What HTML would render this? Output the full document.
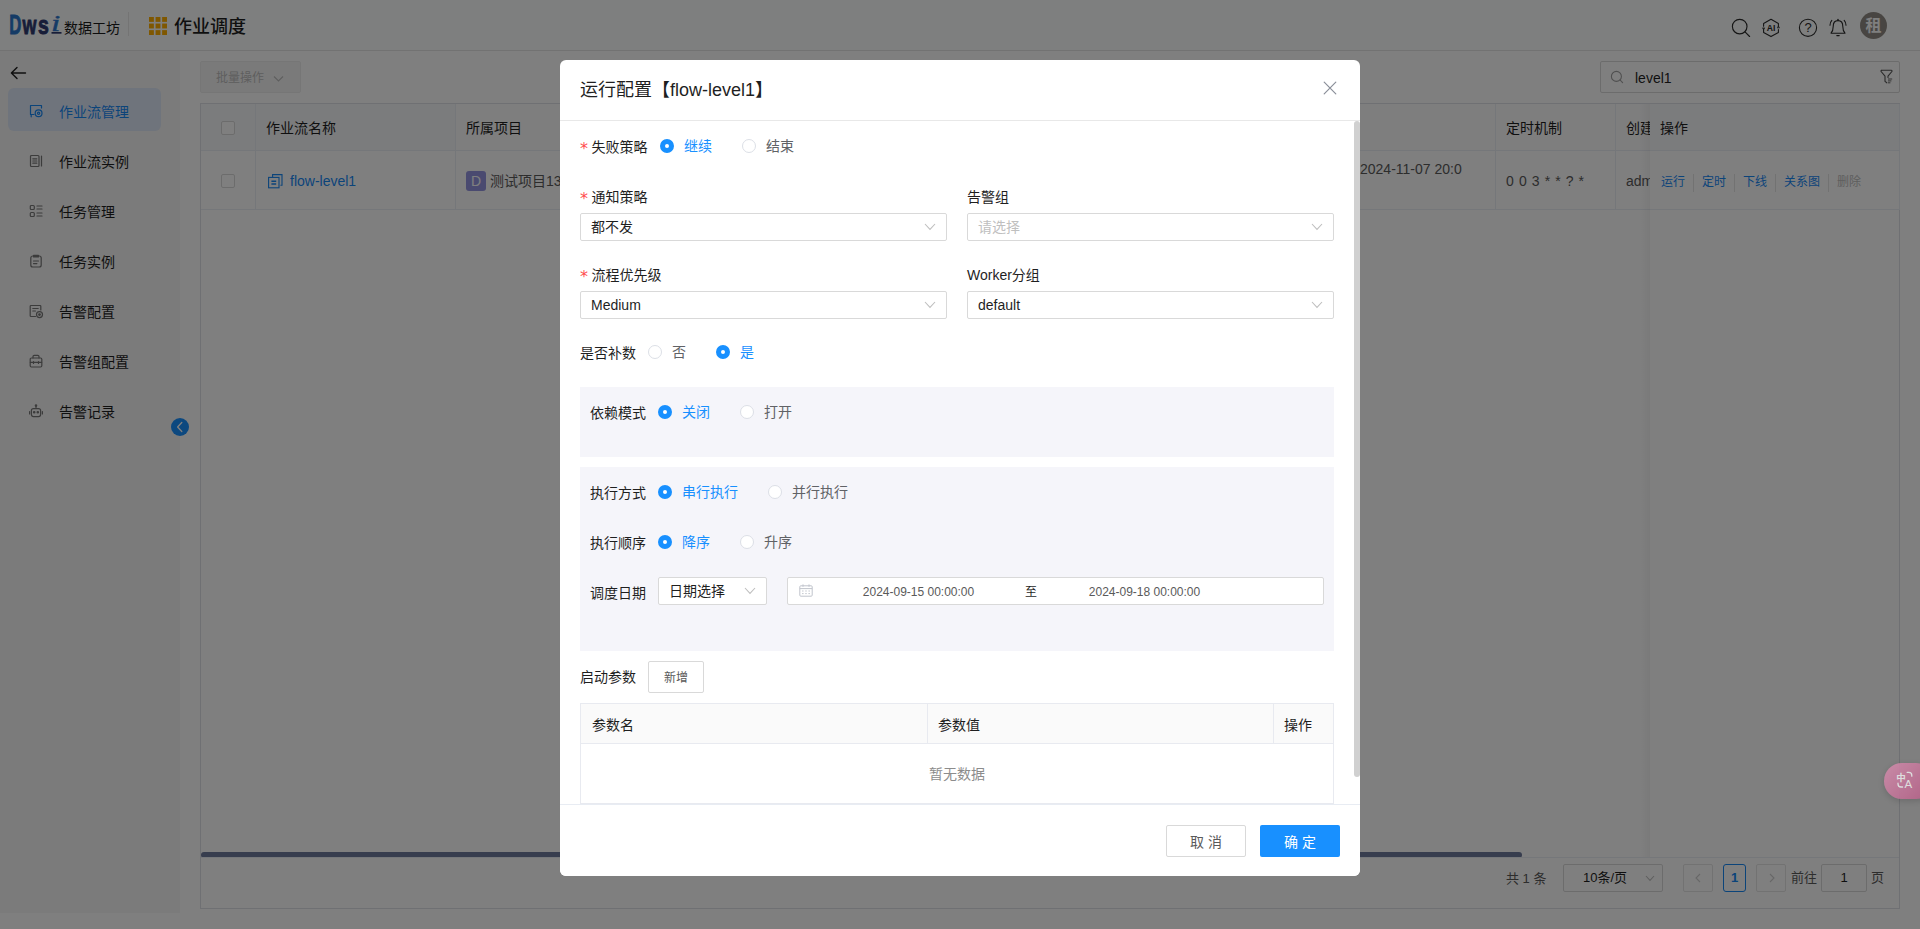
<!DOCTYPE html>
<html lang="zh-CN">
<head>
<meta charset="utf-8">
<title>作业调度</title>
<style>
*{box-sizing:border-box;margin:0;padding:0}
html,body{width:1920px;height:929px;overflow:hidden;background:#fff}
body{font-family:"Liberation Sans","Noto Sans CJK SC",sans-serif;font-size:14px;color:#1f1f1f;position:relative}
.abs{position:absolute}
/* ---------- header ---------- */
#hdr{position:absolute;left:0;top:0;width:1920px;height:51px;background:#fdfffe;border-bottom:1px solid #e4e4e4}
#hdr .cn{position:absolute;left:64px;top:18.5px;font-size:14px;line-height:18px;color:#1a1a1a;white-space:nowrap}
#hdr .vdiv{position:absolute;left:128px;top:12px;width:1px;height:24px;background:#e8e8e8}
#hdr .title{position:absolute;left:174px;top:13.5px;font-size:18px;line-height:26px;font-weight:500;color:#1f1f1f;white-space:nowrap}
/* ---------- sidebar ---------- */
#side{position:absolute;left:0;top:51px;width:180px;height:862px;background:#f6f6f6}
#side .item{position:absolute;left:8px;width:153px;height:43px;border-radius:6px;font-size:14px;line-height:48px;color:#1f1f1f;padding-left:51px;white-space:nowrap}
#side .item.on{background:#dfe8f8;color:#1788f5}
#side .item svg{position:absolute;left:20px;top:15px}
#mainbg{position:absolute;left:180px;top:51px;width:1740px;height:862px;background:#fff}
#colbtn{position:absolute;left:171px;top:418px;width:18px;height:18px;border-radius:50%;background:#1890ff}
/* ---------- content ---------- */
.btn-batch{position:absolute;left:200px;top:61px;width:101px;height:32px;border-radius:2px;background:#f5f5f5;border:1px solid #ededed;color:#bdbdbd;font-size:12px;line-height:33px;padding-left:15px;white-space:nowrap}
.search{position:absolute;left:1600px;top:61px;width:300px;height:32px;border:1px solid #d9d9d9;border-radius:2px;background:#fff;font-size:14px;line-height:33px;padding-left:34px;color:#1f1f1f}
#tbl{position:absolute;left:200px;top:103px;width:1700px;height:806px;border:1px solid #dfe1e6;background:#fff}
#tbl .th{position:absolute;top:-1px;height:47px;background:#f7f8fa;border-bottom:1px solid #ebeef5;border-right:1px solid #ebeef5;font-size:14px;line-height:49px;padding-left:10px;color:#1f1f1f;white-space:nowrap;overflow:hidden}
#tbl .lnk{color:#1788f5 !important}
#tbl .td{position:absolute;top:46px;height:59px;border-bottom:1px solid #ebeef5;border-right:1px solid #ebeef5;font-size:14px;line-height:60px;padding-left:10px;color:#5a5a5a;white-space:nowrap;overflow:hidden}
.cb{position:absolute;width:14px;height:14px;border:1px solid #d9d9d9;border-radius:2px;background:#fff}
.lnk{color:#1788f5}
/* ---------- overlay + modal ---------- */
#mask{position:absolute;left:0;top:0;width:1920px;height:929px;background:rgba(0,0,0,.5)}
#modal{position:absolute;left:560px;top:60px;width:800px;height:816px;background:#fff;border-radius:6px;overflow:hidden}
#modal .mh{position:absolute;left:0;top:0;width:800px;height:61px;border-bottom:1px solid #e8e8e8}
#modal .mh .t{position:absolute;left:20px;top:16px;font-size:18px;line-height:28px;color:#1f1f1f;white-space:nowrap}
#modal .mf{position:absolute;left:0;top:744px;width:800px;height:72px;border-top:1px solid #e8ecf3;background:#fff}
.lab{position:absolute;font-size:14px;line-height:20px;color:#1f1f1f;white-space:nowrap}
.lab i{font-style:normal;color:#ff4d4f;font-family:"DejaVu Sans",sans-serif;font-size:16px;line-height:20px;display:inline-block;width:7.5px;margin-right:4px;vertical-align:-1.5px;font-weight:400}
.sel{position:absolute;height:28px;border:1px solid #d9d9d9;border-radius:2px;background:#fff;font-size:14px;line-height:26px;padding-left:10px;color:#1f1f1f;white-space:nowrap}
.sel.ph{color:#bfbfbf}
.sel svg{position:absolute;right:10.5px;top:9px}
.rd{position:absolute;width:14px;height:14px;border-radius:50%;border:1px solid #dcdfe6;background:#fff}
.rd.on{border:5px solid #1890ff}
.rt{position:absolute;font-size:14px;line-height:20px;color:#606266;white-space:nowrap}
.rt.on{color:#1890ff}
.panel{position:absolute;left:20px;width:754px;background:#f5f5fa}
.sp{display:inline-block;width:1px;height:18px;background:#e4e4e4;margin:0 8px;vertical-align:middle}
</style>
</head>
<body>
<!-- ================= HEADER ================= -->
<div id="hdr">
  <svg class="abs" style="left:8px;top:8px" width="60" height="32" viewBox="0 0 60 32" font-family="Liberation Sans, sans-serif" font-weight="700" font-size="28">
    <text transform="translate(1.2,26) scale(.6,1)" fill="#2b76cc" stroke="#2b76cc" stroke-width=".9">D</text>
    <text transform="translate(14.6,26) scale(.69,1)" font-size="26" fill="#2e3a70" stroke="#2e3a70" stroke-width=".9">w</text>
    <text transform="translate(30,26) scale(.75,1)" font-size="26" fill="#2e3a70" stroke="#2e3a70" stroke-width=".9">s</text>
    <text transform="translate(43,23) scale(1.4,1)" font-family="Liberation Serif, serif" font-style="italic" font-weight="400" font-size="24" fill="#2b76cc" stroke="#2b76cc" stroke-width=".4">i</text>
    <rect x="43.5" y="24" width="10" height="1.7" fill="#2e3a70"/>
  </svg>
  <div class="cn">数据工坊</div>
  <div class="vdiv"></div>
  <svg class="abs" style="left:149px;top:17px" width="18" height="18" viewBox="0 0 17 17"><g fill="#ffae00"><rect x="0" y="0" width="4.6" height="4.6"/><rect x="6.2" y="0" width="4.6" height="4.6"/><rect x="12.4" y="0" width="4.6" height="4.6"/><rect x="0" y="6.2" width="4.6" height="4.6"/><rect x="6.2" y="6.2" width="4.6" height="4.6"/><rect x="12.4" y="6.2" width="4.6" height="4.6"/><rect x="0" y="12.4" width="4.6" height="4.6"/><rect x="6.2" y="12.4" width="4.6" height="4.6"/><rect x="12.4" y="12.4" width="4.6" height="4.6"/></g></svg>
  <div class="title">作业调度</div>
  <!-- right icons -->
  <svg class="abs" style="left:1730px;top:17px" width="22" height="22" viewBox="0 0 22 22" fill="none" stroke="#2a2a2a" stroke-width="1.15"><circle cx="9.7" cy="9.6" r="7.3"/><path d="M15 14.9 L19.6 19.5" stroke-linecap="round"/></svg>
  <svg class="abs" style="left:1761px;top:18px" width="20" height="20" viewBox="0 0 20 20" fill="none" stroke="#2a2a2a" stroke-width="1.1" stroke-linejoin="round" stroke-linecap="round"><path d="M2.6 8.2 V5.4 L10 1.2 L17.4 5.4 V8.2"/><path d="M17.4 11.6 V14.4 L10 18.6 L2.6 14.4 V11.6"/><path d="M1.6 10.2 l1 1.6 l1 -1.6 z" fill="#2a2a2a" stroke-width=".6"/><path d="M16.4 9.6 l1 -1.6 l1 1.6 z" fill="#2a2a2a" stroke-width=".6"/><text x="10" y="13" font-family="Liberation Sans, sans-serif" font-size="8.6" font-weight="700" text-anchor="middle" fill="#2a2a2a" stroke="none">AI</text></svg>
  <svg class="abs" style="left:1798px;top:18px" width="20" height="20" viewBox="0 0 20 20" fill="none" stroke="#2a2a2a" stroke-width="1.1"><circle cx="10" cy="9.8" r="8.6"/><text x="10" y="14.4" font-family="Liberation Sans, sans-serif" font-size="13" text-anchor="middle" fill="#2a2a2a" stroke="none">?</text></svg>
  <svg class="abs" style="left:1828px;top:18px" width="20" height="21" viewBox="0 0 20 21" fill="none" stroke="#2a2a2a" stroke-width="1.1" stroke-linecap="round" stroke-linejoin="round"><path d="M10 2.6 C6.6 2.6 5.2 5.4 5.2 8.4 C5.2 12 4.4 13.6 3 15.2 H17 C15.6 13.6 14.8 12 14.8 8.4 C14.8 5.4 13.4 2.6 10 2.6 Z"/><path d="M10 1.2 V2.4"/><path d="M8.8 17.6 h2.4"/><path d="M3.8 2.4 C2.6 3.8 2 5.4 2 7.2"/><path d="M16.2 2.4 C17.4 3.8 18 5.4 18 7.2"/></svg>
  <div class="abs" style="left:1860px;top:12px;width:27px;height:27px;border-radius:50%;background:#918b85;color:#fff;font-size:16px;font-weight:700;line-height:27px;text-align:center">租</div>
</div>

<!-- ================= SIDEBAR ================= -->
<div id="side">
  <svg class="abs" style="left:10px;top:15px" width="17" height="14" viewBox="0 0 17 14" fill="none" stroke="#1f1f1f" stroke-width="1.4" stroke-linecap="round" stroke-linejoin="round"><path d="M15.5 7 H1.6 M7 1.4 L1.4 7 L7 12.6"/></svg>
  <div class="item on" style="top:37px">
    <svg width="16" height="16" viewBox="0 0 16 16" fill="none" stroke="#1788f5" stroke-width="1.2" stroke-linecap="round" stroke-linejoin="round"><path d="M6 11.5 H2.5 V2.5 H13.5 V5"/><path d="M3.2 13.8 V12"/><circle cx="10.6" cy="10.2" r="3.4"/><circle cx="10.6" cy="10.2" r="1.1"/></svg>作业流管理</div>
  <div class="item" style="top:87px">
    <svg width="16" height="16" viewBox="0 0 16 16" fill="none" stroke="#787878" stroke-width="1.2" stroke-linecap="round" stroke-linejoin="round"><rect x="2.5" y="2.5" width="8.5" height="11" rx="1"/><path d="M13.5 3 V13"/><path d="M4.8 5.8 h4 M4.8 8 h4 M4.8 10.2 h4"/></svg>作业流实例</div>
  <div class="item" style="top:137px">
    <svg width="16" height="16" viewBox="0 0 16 16" fill="none" stroke="#787878" stroke-width="1.2" stroke-linecap="round" stroke-linejoin="round"><rect x="2.3" y="2.5" width="4" height="4" rx="1"/><rect x="2.3" y="9.5" width="4" height="4" rx="1"/><path d="M9 3 h5 M9 6 h5 M9 10 h5 M9 13 h5"/></svg>任务管理</div>
  <div class="item" style="top:187px">
    <svg width="16" height="16" viewBox="0 0 16 16" fill="none" stroke="#787878" stroke-width="1.2" stroke-linecap="round" stroke-linejoin="round"><rect x="2.8" y="3" width="10.4" height="11" rx="2"/><path d="M5.6 2.4 h4.8 v1.6 h-4.8 z" fill="#787878"/><path d="M5.5 8 h5 M5.5 10.6 h3.4"/></svg>任务实例</div>
  <div class="item" style="top:237px">
    <svg width="16" height="16" viewBox="0 0 16 16" fill="none" stroke="#787878" stroke-width="1.2" stroke-linecap="round" stroke-linejoin="round"><path d="M7.5 13.5 H3 a.8 .8 0 0 1 -.8 -.8 V3.3 a.8 .8 0 0 1 .8 -.8 H12 a.8 .8 0 0 1 .8 .8 V7"/><path d="M4.8 5.5 h5.4 M4.8 8 h2.6"/><circle cx="11.5" cy="11.6" r="3"/><circle cx="11.5" cy="11.6" r=".8" fill="#787878"/></svg>告警配置</div>
  <div class="item" style="top:287px">
    <svg width="16" height="16" viewBox="0 0 16 16" fill="none" stroke="#787878" stroke-width="1.2" stroke-linecap="round" stroke-linejoin="round"><rect x="2.2" y="5" width="11.6" height="9" rx="1.2"/><path d="M5 5 V3.6 a1.2 1.2 0 0 1 1.2 -1.2 h3.6 A1.2 1.2 0 0 1 11 3.6 V5"/><path d="M2.4 9.4 h11.2"/><path d="M5.5 8.6 v1.8 M10.5 8.6 v1.8"/></svg>告警组配置</div>
  <div class="item" style="top:337px">
    <svg width="16" height="16" viewBox="0 0 16 16" fill="none" stroke="#787878" stroke-width="1.2" stroke-linecap="round" stroke-linejoin="round"><rect x="3.4" y="5.6" width="9.2" height="8" rx="2"/><path d="M8 5.4 V3.4"/><circle cx="8" cy="2.6" r=".7" fill="#787878"/><path d="M1.6 8.6 v2.4 M14.4 8.6 v2.4"/><circle cx="6.2" cy="9.2" r=".7" fill="#787878"/><circle cx="9.8" cy="9.2" r=".7" fill="#787878"/></svg>告警记录</div>
</div>
<div id="mainbg"></div>
<div id="colbtn"><svg class="abs" style="left:4px;top:3px" width="10" height="12" viewBox="0 0 10 12" fill="none" stroke="#fff" stroke-width="1.3" stroke-linecap="round" stroke-linejoin="round"><path d="M6.8 1.5 L2.6 6 L6.8 10.5"/></svg></div>

<!-- ================= CONTENT ================= -->
<div class="btn-batch">批量操作<svg class="abs" style="left:72px;top:13px" width="11" height="8" viewBox="0 0 11 8" fill="none" stroke="#bdbdbd" stroke-width="1.1"><path d="M1 1.5 L5.5 6 L10 1.5"/></svg></div>
<div class="search">level1
  <svg class="abs" style="left:9px;top:8px" width="14" height="14" viewBox="0 0 14 14" fill="none" stroke="#a0a0a0" stroke-width="1.1"><circle cx="6.4" cy="6.4" r="5"/><path d="M10.2 10.2 L12.6 12.6" stroke-linecap="round"/></svg>
  <svg class="abs" style="left:279px;top:6.5px" width="13" height="15" viewBox="0 0 13 15" fill="none" stroke="#555" stroke-width="1.1" stroke-linejoin="round" stroke-linecap="round"><path d="M1.7 1.2 H11.3 a.8 .8 0 0 1 .6 1.3 L8 7.2 V8.4"/><path d="M1.7 1.2 a.8 .8 0 0 0 -.6 1.3 L5 7.2 V12.4 L6.8 13.8"/><path d="M8.4 10 h3.4 M8.4 11.9 h2.6 M8.4 13.8 h1.6" stroke-width=".9"/></svg>
</div>
<div id="tbl"><div class="abs" style="left:0;top:1px;width:1697px;height:803px">
  <div class="th" style="left:0;width:55px"></div>
  <div class="th" style="left:55px;width:200px">作业流名称</div>
  <div class="th" style="left:255px;width:1040px;background:#fcfcfd">所属项目</div>
  <div class="th" style="left:1295px;width:120px;background:#fcfcfd">定时机制</div>
  <div class="th" style="left:1415px;width:284px;background:#fcfcfd">创建</div>
  <div class="th" style="left:1449px;width:249px;border-right:0;padding-left:10px">操作</div>
  <div class="cb" style="left:20px;top:16px"></div>

  <div class="td" style="left:0;width:55px"></div>
  <div class="td lnk" style="left:55px;width:200px;padding-left:34px">flow-level1
    <svg class="abs" style="left:11px;top:22px" width="16" height="16" viewBox="0 0 16 16" fill="none" stroke="#1788f5" stroke-width="1.1" stroke-linejoin="miter" stroke-linecap="butt"><rect x="1.6" y="4.4" width="10.4" height="10.4"/><path d="M5.6 4.2 V1.6 H15 V12.2 H13.4"/><path d="M4.4 8.2 h4.8 M4.4 11 h4.8" stroke-width="1.5"/></svg>
  </div>
  <div class="td" style="left:255px;width:1040px;padding-left:34px">测试项目13
    <div class="abs" style="left:10px;top:20px;width:20px;height:20px;border-radius:3px;background:#9595e0;color:#fff;font-size:14px;line-height:20px;text-align:center">D</div>
    <div class="abs" style="left:904px;top:-12px;font-size:14px">2024-11-07 20:0</div>
  </div>
  <div class="td" style="left:1295px;width:120px;letter-spacing:.6px">0 0 3 * * ? *</div>
  <div class="td" style="left:1415px;width:284px">adm</div>
  <div class="td" style="left:1449px;width:249px;border-right:0;background:#fff;padding-left:11px;font-size:12px;line-height:62px">
    <span class="lnk">运行</span><span class="sp"></span><span class="lnk">定时</span><span class="sp"></span><span class="lnk">下线</span><span class="sp"></span><span class="lnk">关系图</span><span class="sp"></span><span style="color:#bdbdbd">删除</span>
  </div>
  <div class="cb" style="left:20px;top:69px"></div>
  <!-- fixed col shadow line to bottom -->
  <div class="abs" style="left:1439px;top:-1px;width:10px;height:754px;background:linear-gradient(90deg,rgba(0,0,0,0),rgba(0,0,0,.045))"></div>
  <!-- h scrollbar -->
  <div class="abs" style="left:0;top:747px;width:1321px;height:6px;border-radius:3px;background:#6e7a9c"></div>
  <div class="abs" style="left:0;top:752px;width:1698px;height:1px;background:#ebeef5"></div>
  <!-- pagination -->
  <div class="abs" style="left:1305px;top:760px;font-size:13px;line-height:28px;color:#5a5a5a;white-space:nowrap">共 1 条</div>
  <div class="abs" style="left:1362px;top:759px;width:100px;height:28px;border:1px solid #d9d9d9;border-radius:2px;font-size:13px;line-height:26px;padding-left:19px;color:#1f1f1f">10条/页<svg class="abs" style="left:81px;top:10px" width="10" height="7" viewBox="0 0 10 7" fill="none" stroke="#bfbfbf" stroke-width="1.1"><path d="M1 1 L5 5.4 L9 1"/></svg></div>
  <div class="abs" style="left:1482px;top:759px;width:30px;height:28px;border:1px solid #e4e4e4;border-radius:2px"><svg class="abs" style="left:10px;top:8px" width="8" height="10" viewBox="0 0 8 10" fill="none" stroke="#cfcfcf" stroke-width="1.1"><path d="M6 1 L2 5 L6 9"/></svg></div>
  <div class="abs" style="left:1522px;top:759px;width:23px;height:28px;border:1px solid #1788f5;border-radius:3px;color:#1788f5;font-size:13px;font-weight:700;line-height:26px;text-align:center">1</div>
  <div class="abs" style="left:1555px;top:759px;width:30px;height:28px;border:1px solid #e4e4e4;border-radius:2px"><svg class="abs" style="left:11px;top:8px" width="8" height="10" viewBox="0 0 8 10" fill="none" stroke="#cfcfcf" stroke-width="1.1"><path d="M2 1 L6 5 L2 9"/></svg></div>
  <div class="abs" style="left:1590px;top:759px;font-size:13px;line-height:28px;color:#5a5a5a">前往</div>
  <div class="abs" style="left:1620px;top:759px;width:46px;height:28px;border:1px solid #d9d9d9;border-radius:2px;font-size:13px;line-height:26px;text-align:center;color:#1f1f1f">1</div>
  <div class="abs" style="left:1670px;top:759px;font-size:13px;line-height:28px;color:#5a5a5a">页</div>
</div></div>

<!-- translate widget (under mask? it is above) -->

<!-- ================= MASK ================= -->
<div id="mask"></div>

<!-- MODAL-START -->
<div id="modal">
  <div class="mh">
    <div class="t">运行配置【flow-level1】</div>
    <svg class="abs" style="left:763px;top:20.5px" width="14" height="14" viewBox="0 0 14 14" fill="none" stroke="#8a8f99" stroke-width="1.2" stroke-linecap="round"><path d="M1.2 1.2 L12.8 12.8 M12.8 1.2 L1.2 12.8"/></svg>
  </div>
  <!-- body; coordinates relative to modal (x-560, y-60) -->
  <div class="lab" style="left:20px;top:77px"><i>*</i>失败策略</div>
  <div class="rd on" style="left:100px;top:79px"></div><div class="rt on" style="left:124px;top:76px">继续</div>
  <div class="rd" style="left:182px;top:79px"></div><div class="rt" style="left:206px;top:76px">结束</div>

  <div class="lab" style="left:20px;top:127px"><i>*</i>通知策略</div>
  <div class="sel" style="left:20px;top:153px;width:367px">都不发<svg width="12" height="8" viewBox="0 0 12 8" fill="none" stroke="#bfbfbf" stroke-width="1.1"><path d="M1 1 L6 6.4 L11 1"/></svg></div>
  <div class="lab" style="left:407px;top:127px">告警组</div>
  <div class="sel ph" style="left:407px;top:153px;width:367px">请选择<svg width="12" height="8" viewBox="0 0 12 8" fill="none" stroke="#bfbfbf" stroke-width="1.1"><path d="M1 1 L6 6.4 L11 1"/></svg></div>

  <div class="lab" style="left:20px;top:205px"><i>*</i>流程优先级</div>
  <div class="sel" style="left:20px;top:231px;width:367px">Medium<svg width="12" height="8" viewBox="0 0 12 8" fill="none" stroke="#bfbfbf" stroke-width="1.1"><path d="M1 1 L6 6.4 L11 1"/></svg></div>
  <div class="lab" style="left:407px;top:205px">Worker分组</div>
  <div class="sel" style="left:407px;top:231px;width:367px">default<svg width="12" height="8" viewBox="0 0 12 8" fill="none" stroke="#bfbfbf" stroke-width="1.1"><path d="M1 1 L6 6.4 L11 1"/></svg></div>

  <div class="lab" style="left:20px;top:283px">是否补数</div>
  <div class="rd" style="left:88px;top:285px"></div><div class="rt" style="left:112px;top:282px">否</div>
  <div class="rd on" style="left:156px;top:285px"></div><div class="rt on" style="left:180px;top:282px">是</div>

  <div class="panel" style="top:327px;height:70px"></div>
  <div class="lab" style="left:30px;top:343px">依赖模式</div>
  <div class="rd on" style="left:98px;top:345px"></div><div class="rt on" style="left:122px;top:342px">关闭</div>
  <div class="rd" style="left:180px;top:345px"></div><div class="rt" style="left:204px;top:342px">打开</div>

  <div class="panel" style="top:407px;height:184px"></div>
  <div class="lab" style="left:30px;top:423px">执行方式</div>
  <div class="rd on" style="left:98px;top:425px"></div><div class="rt on" style="left:122px;top:422px">串行执行</div>
  <div class="rd" style="left:208px;top:425px"></div><div class="rt" style="left:232px;top:422px">并行执行</div>

  <div class="lab" style="left:30px;top:473px">执行顺序</div>
  <div class="rd on" style="left:98px;top:475px"></div><div class="rt on" style="left:122px;top:472px">降序</div>
  <div class="rd" style="left:180px;top:475px"></div><div class="rt" style="left:204px;top:472px">升序</div>

  <div class="lab" style="left:30px;top:523px">调度日期</div>
  <div class="sel" style="left:98px;top:517px;width:109px;padding-left:10px">日期选择<svg width="12" height="8" viewBox="0 0 12 8" fill="none" stroke="#bfbfbf" stroke-width="1.1"><path d="M1 1 L6 6.4 L11 1"/></svg></div>
  <div class="sel" style="left:227px;top:517px;width:537px;height:28px;padding:0">
    <svg style="position:absolute;left:11px;top:6px;right:auto" width="14" height="13" viewBox="0 0 14 13" fill="none" stroke="#c0c4cc" stroke-width="1"><rect x=".8" y="1.8" width="12.4" height="10.4" rx="1"/><path d="M.8 4.6 h12.4 M4 .4 v2.4 M10 .4 v2.4" /><path d="M3 7 h1.6 M6.2 7 h1.6 M9.4 7 h1.6 M3 9.6 h1.6 M6.2 9.6 h1.6 M9.4 9.6 h1.6" stroke-width=".9"/></svg>
    <span class="abs" style="left:30px;top:0;width:201px;text-align:center;font-size:12px;line-height:28.6px;color:#5a5a5a">2024-09-15 00:00:00</span>
    <span class="abs" style="left:237px;top:0;font-size:12px;line-height:28px;color:#1f1f1f">至</span>
    <span class="abs" style="left:256px;top:0;width:201px;text-align:center;font-size:12px;line-height:28.6px;color:#5a5a5a">2024-09-18 00:00:00</span>
  </div>

  <div class="lab" style="left:20px;top:607px">启动参数</div>
  <div class="abs" style="left:88px;top:601px;width:56px;height:32px;border:1px solid #d9d9d9;border-radius:2px;font-size:12px;line-height:32.6px;text-align:center;color:#5a5a5a">新增</div>

  <div class="abs" style="left:20px;top:643px;width:754px;height:101px;border:1px solid #e8eaf0;border-bottom:0"></div>
  <div class="abs" style="left:21px;top:644px;width:752px;height:40px;background:#fafafa;border-bottom:1px solid #e8eaf0"></div>
  <div class="abs" style="left:367px;top:644px;width:1px;height:40px;background:#e8eaf0"></div>
  <div class="abs" style="left:713px;top:644px;width:1px;height:40px;background:#e8eaf0"></div>
  <div class="lab" style="left:32px;top:655px">参数名</div>
  <div class="lab" style="left:378px;top:655px">参数值</div>
  <div class="lab" style="left:724px;top:655px">操作</div>
  <div class="lab" style="left:369px;top:704px;color:#8c8c8c;font-size:14px">暂无数据</div>

  <div class="abs" style="left:20px;top:743px;width:754px;height:1px;background:#e8eaf0"></div>
  <!-- modal scrollbar -->
  <div class="abs" style="left:794px;top:61px;width:6px;height:656px;border-radius:3px;background:#d0d0d0"></div>

  <div class="mf">
    <div class="abs" style="left:606px;top:20px;width:80px;height:32px;border:1px solid #d9d9d9;border-radius:2px;font-size:14px;line-height:32px;text-align:center;color:#5a5a5a">取 消</div>
    <div class="abs" style="left:700px;top:20px;width:80px;height:32px;border-radius:2px;background:#1890ff;font-size:14px;line-height:34px;text-align:center;color:#fff">确 定</div>
  </div>
</div>
<!-- translate widget -->
<div class="abs" style="left:1884px;top:763px;width:50px;height:36px;border-radius:18px;background:linear-gradient(135deg,#cf8dab,#b35f86);box-shadow:0 2px 6px rgba(0,0,0,.16);opacity:.92">
  <svg class="abs" style="left:10px;top:6px" width="24" height="24" viewBox="0 0 24 24" fill="none" stroke="#e6e6e6" stroke-width="1.3" stroke-linecap="round">
    <text x="2.2" y="11.6" font-family="Noto Sans CJK SC, sans-serif" font-size="9.5" font-weight="700" fill="#e6e6e6" stroke="none">中</text>
    <text x="10.6" y="18.6" font-family="Liberation Sans, sans-serif" font-size="11.5" fill="#e6e6e6" stroke="none">A</text>
    <path d="M13.2 3.4 h1.6 a3 3 0 0 1 3 3 v.8"/>
    <path d="M4 14.2 v.8 a3 3 0 0 0 3 3 h1.6"/>
  </svg>
</div>
<!-- MODAL-END -->

</body>
</html>
